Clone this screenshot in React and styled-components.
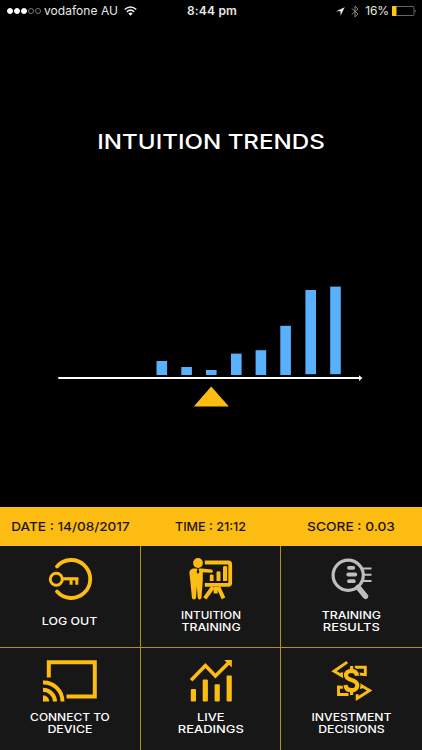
import React from "react";
import styled, { createGlobalStyle } from "styled-components";

const GOLD = "#fdbc11";
const TILE = "#171717";

const GlobalStyle = createGlobalStyle`
  body { margin: 0; background: #000; }
  * { box-sizing: border-box; }
`;

const Screen = styled.main`
  width: 422px;
  height: 750px;
  display: flex;
  flex-direction: column;
  overflow: hidden;
  background: #000;
  color: #fff;
  font-family: Inter, "Liberation Sans", sans-serif;
`;

const StatusBar = styled.header`
  height: 22px;
  flex: none;
  display: grid;
  grid-template-columns: 1fr auto 1fr;
  align-items: center;
  padding: 0 5px 0 7px;
  font-size: 12px;
  line-height: 22px;
  color: #e8e8e8;
`;

const StatusGroup = styled.div`
  display: flex;
  align-items: center;
  height: 22px;
  justify-content: ${(p) => (p.$end ? "flex-end" : "flex-start")};
`;

const Signal = styled.div`
  display: flex;
  gap: 1px;
  margin-right: 3px;
`;

const Dot = styled.i`
  width: 6px;
  height: 6px;
  border-radius: 50%;
  border: 1px solid ${(p) => (p.$on ? "#fff" : "#777")};
  background: ${(p) => (p.$on ? "#fff" : "transparent")};
`;

const Carrier = styled.span`
  letter-spacing: 0.04px;
  margin-right: 6px;
`;

const Clock = styled.span`
  font-weight: 600;
  letter-spacing: 0.2px;
`;

const Percent = styled.span`
  margin: 0 3px 0 6px;
  letter-spacing: -0.1px;
`;

const Glyph = styled.svg`
  display: block;
  flex: none;
  overflow: visible;
`;

const Bluetooth = styled(Glyph)`
  margin-left: 6px;
`;

const Wide = styled.span`
  display: block;
  white-space: nowrap;
  transform: scaleX(${(p) => p.$stretch});
`;

const Title = styled.h1`
  margin: 108px 0 0;
  height: 24px;
  font-size: 20px;
  line-height: 24px;
  font-weight: 500;
  text-align: center;
`;

const ChartArea = styled.section`
  flex: 1;
  display: flex;
  justify-content: center;
  padding-top: 126px;
`;

const InfoBar = styled.section`
  height: 39px;
  flex: none;
  display: grid;
  grid-template-columns: 141px 139px 142px;
  align-items: center;
  background: ${GOLD};
  color: #1c1503;
  font-size: 12px;
  font-weight: 500;
  text-align: center;
`;

const Menu = styled.nav`
  height: 204px;
  flex: none;
  display: grid;
  grid-template-columns: 140px 139px 141px;
  grid-template-rows: 101px 102px;
  gap: 1px;
  background: #b88d1d;
`;

const Tile = styled.button`
  border: 0;
  padding: 12px 0 0;
  display: flex;
  flex-direction: column;
  align-items: center;
  background: ${TILE};
  color: #fff;
  font-family: inherit;
`;

const TileLabel = styled.span`
  height: 27px;
  margin-top: 8px;
  display: flex;
  flex-direction: column;
  justify-content: center;
  font-size: 10.5px;
  font-weight: 500;
  line-height: 12px;
`;

const BARS = [
  { x: 156.5, top: 361, bottom: 375 },
  { x: 181.3, top: 367, bottom: 375 },
  { x: 206, top: 370, bottom: 375 },
  { x: 231, top: 353.6, bottom: 375 },
  { x: 255.6, top: 350.2, bottom: 375 },
  { x: 280.3, top: 325.8, bottom: 375 },
  { x: 305.4, top: 290, bottom: 374.2 },
  { x: 330.2, top: 286.6, bottom: 374.2 },
];

function TrendChart() {
  return (
    <Glyph width="306" height="130" viewBox="58 280 306 130" role="img" aria-label="Intuition trend">
      {BARS.map((b) => (
        <rect key={b.x} x={b.x} y={b.top} width="10.6" height={b.bottom - b.top} fill="#59b0fc" />
      ))}
      <path d="M58.3 378.1H360" stroke="#fff" strokeWidth="2" />
      <path d="M359 375.2L362.4 378.1L359 381Z" fill="#fff" />
      <path d="M211.2 386.5L228.9 406.5H193.8Z" fill={GOLD} />
    </Glyph>
  );
}

function LogoutIcon() {
  return (
    <Glyph width="42" height="42" viewBox="0 0 42 42" fill="none" stroke={GOLD}>
      <path d="M8 8.4A19 19 0 1 1 8 33.6" strokeWidth="3.8" strokeLinecap="round" />
      <circle cx="7.3" cy="21.3" r="6" strokeWidth="3" />
      <path d="M13.5 20.8H29.3" strokeWidth="3.2" />
      <path d="M22.1 21V26.8M27.8 20V26.8" strokeWidth="3" />
    </Glyph>
  );
}

function TrainingIcon() {
  return (
    <Glyph width="44" height="42" viewBox="0 0 44 42" fill={GOLD}>
      <path d="M15.8 4.5H39.2Q41.2 4.5 41.2 6.5V24.8Q41.2 26.8 39.2 26.8H15.8" fill="none" stroke={GOLD} strokeWidth="3.8" strokeLinejoin="round" />
      <circle cx="9" cy="5" r="4.9" />
      <path d="M4 10.5H13L22.5 11.5Q24.5 12 23.8 14Q23.3 15 21.5 14.8L13.8 14.3V22L12.6 38.5Q12.4 41.5 10.4 41.5Q9 41.5 8.7 39.5L7.8 28L7.1 39.5Q6.8 41.5 5 41.5Q3 41.5 2.8 38.5L1.4 24L.4 15Q.2 11.5 4 10.5Z" />
      <path d="M8 10H10L9.6 11.6L10.4 14L9 16L7.6 14L8.4 11.6Z" fill={TILE} />
      <path d="M20.8 17.5Q20.8 16.6 22.6 16.6Q24.6 16.6 24.6 17.5V23H20.8ZM27.5 14.2Q27.5 13.2 29.4 13.2Q31.5 13.2 31.5 14.2V23H27.5ZM34 9.2Q34 8 36.2 8Q38.2 8 38.2 9.2V23H34Z" />
      <path d="M24 29L15.8 40.3M29.3 29L34.5 40.3M26.7 29V35.5" fill="none" stroke={GOLD} strokeWidth="4" />
    </Glyph>
  );
}

function ResultsIcon() {
  return (
    <Glyph width="42" height="42" viewBox="0 0 42 42" fill="none" stroke="#bebebe">
      <circle cx="17.2" cy="17.2" r="15.1" strokeWidth="3.2" />
      <path d="M18 9.8H22.3M17.3 16.5H24.3M18 23.2H22.8" strokeWidth="3.8" strokeLinecap="round" />
      <path d="M31 10.5H40.5M32 16.8H40.5M31 23.1H40.5" strokeWidth="2" />
      <path d="M27.1 29.3L34.5 38.3" strokeWidth="5.4" strokeLinecap="round" />
    </Glyph>
  );
}

function CastIcon() {
  return (
    <Glyph width="54" height="42" viewBox="0 0 54 42" fill="none" stroke={GOLD} strokeWidth="4">
      <path d="M5.8 17.5V2.2H51.8V36.4H23.5" />
      <path d="M0 22.5A19 19 0 0 1 19.5 41.5M0 29.8A12 12 0 0 1 12 41.5" strokeWidth="4" />
      <path d="M0 35.3A6.2 6.2 0 0 1 6.2 41.5H0Z" fill={GOLD} stroke="none" />
    </Glyph>
  );
}

function ReadingsIcon() {
  return (
    <Glyph width="42" height="42" viewBox="0 0 42 42" fill={GOLD}>
      <rect x=".8" y="29" width="5.2" height="12.4" rx="1" />
      <rect x="12.7" y="19.4" width="5.2" height="22" rx="1" />
      <rect x="24.6" y="24.2" width="5.2" height="17.2" rx="1" />
      <rect x="36.6" y="15.4" width="5.2" height="26" rx="1" />
      <path d="M1.1 20.2L15.4 5.5L25.4 16L38.2 3.2" fill="none" stroke={GOLD} strokeWidth="3.6" />
      <path d="M34.2 0H41.8V7.6Z" />
    </Glyph>
  );
}

function InvestIcon() {
  const dollar = "M26 15.7C25.6 12.4 23.7 10.8 20.5 10.8C17 10.8 15 12.6 15 15.3C15 21.5 26.3 18.4 26.3 25.2C26.3 28.3 24 30.2 20.6 30.2C17 30.2 14.7 28.2 14.5 25";
  return (
    <Glyph width="42" height="42" viewBox="0 0 42 42" fill="none" stroke={GOLD}>
      <g strokeWidth="2.9">
        <path d="M16.2 2.1L3 11.2L10.8 15.8V12.5" />
        <path d="M23.8 7.3H34.3V14.6L28 14" />
        <path d="M12.3 27.2L7.5 27V34.5H17.5" />
        <path d="M29.8 28.8V25.3L38.6 30.5L26.2 38.4V34.3" />
      </g>
      <path d={dollar} stroke={TILE} strokeWidth="6.4" />
      <path d={dollar} strokeWidth="4.2" />
      <path d="M20.6 6V11M20.6 30V35" strokeWidth="3.2" />
    </Glyph>
  );
}

const INFO = [
  { text: "DATE : 14/08/2017", stretch: 1.13 },
  { text: "TIME : 21:12", stretch: 1.05 },
  { text: "SCORE : 0.03", stretch: 1.145 },
];

const TILES = [
  { Icon: LogoutIcon, lines: [["LOG OUT", 1.18]] },
  { Icon: TrainingIcon, lines: [["INTUITION", 1.11], ["TRAINING", 1.17]] },
  { Icon: ResultsIcon, lines: [["TRAINING", 1.17], ["RESULTS", 1.23]] },
  { Icon: CastIcon, lines: [["CONNECT TO", 1.14], ["DEVICE", 1.18]] },
  { Icon: ReadingsIcon, lines: [["LIVE", 1.22], ["READINGS", 1.23]] },
  { Icon: InvestIcon, lines: [["INVESTMENT", 1.16], ["DECISIONS", 1.17]] },
];

export default function App() {
  return (
    <Screen>
      <GlobalStyle />
      <StatusBar>
        <StatusGroup>
          <Signal>
            {[1, 1, 1, 0, 0].map((on, i) => <Dot key={i} $on={on} />)}
          </Signal>
          <Carrier>vodafone AU</Carrier>
          <Glyph width="13" height="10" viewBox="0 0 13 10" fill="none" stroke="#eee" strokeWidth="1.6">
            <path d="M.7 3.5Q6.5-1.5 12.3 3.5M2.8 5.8Q6.5 2.5 10.2 5.8" />
            <path d="M4.3 7.4Q6.5 5.8 8.7 7.4L6.5 9.7Z" fill="#eee" stroke="none" />
          </Glyph>
        </StatusGroup>
        <Clock>8:44 pm</Clock>
        <StatusGroup $end>
          <Glyph width="9" height="9" viewBox="0 0 9 9" fill="#eee">
            <path d="M8.7.3L.2 4.3H4.5V8.7Z" />
          </Glyph>
          <Bluetooth width="8" height="13" viewBox="0 0 8 13" fill="none" stroke="#858585">
            <path d="M.7 3.5L7 9L4 12V1L7 4L.7 9.5" />
          </Bluetooth>
          <Percent>16%</Percent>
          <Glyph width="25" height="10" viewBox="0 0 25 10">
            <rect x=".5" y=".5" width="21.5" height="9" rx="1" fill="none" stroke="#666" />
            <rect x="0" y="0" width="4.5" height="10" rx=".7" fill="#ffca0a" />
            <path d="M23 3.5Q24.8 5 23 6.5Z" fill="#777" />
          </Glyph>
        </StatusGroup>
      </StatusBar>
      <Title><Wide $stretch={1.205}>INTUITION TRENDS</Wide></Title>
      <ChartArea><TrendChart /></ChartArea>
      <InfoBar>
        {INFO.map((i) => <Wide key={i.text} $stretch={i.stretch}>{i.text}</Wide>)}
      </InfoBar>
      <Menu>
        {TILES.map(({ Icon, lines }, i) => (
          <Tile key={i}>
            <Icon />
            <TileLabel>
              {lines.map(([text, s]) => <Wide key={text} $stretch={s}>{text}</Wide>)}
            </TileLabel>
          </Tile>
        ))}
      </Menu>
    </Screen>
  );
}
